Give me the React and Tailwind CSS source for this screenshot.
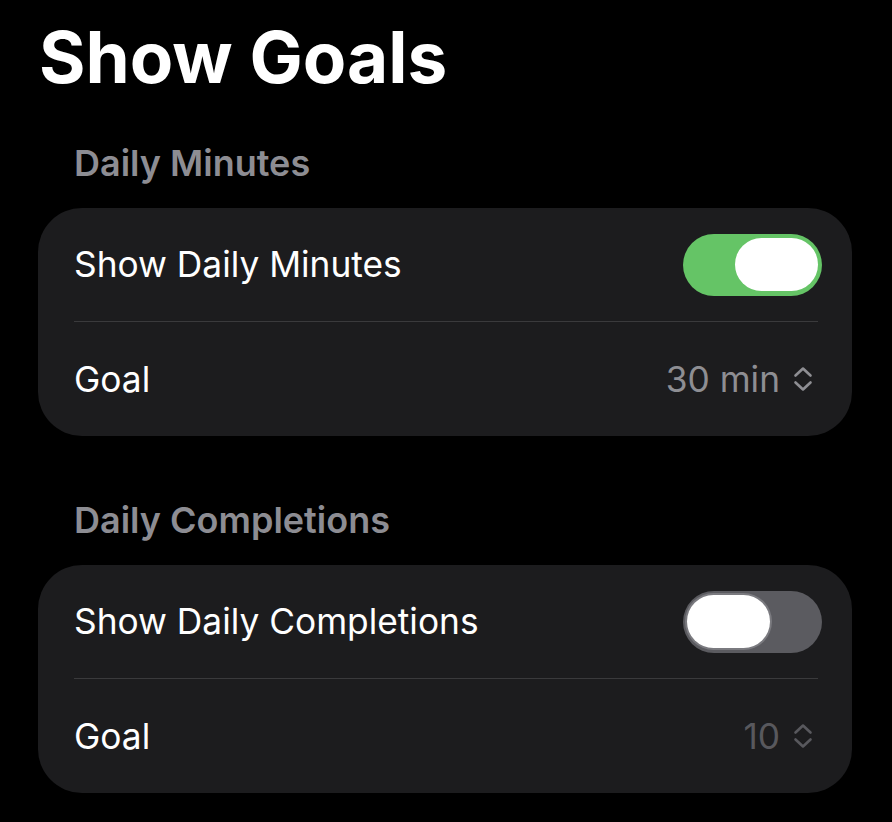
import React, { useState } from "react";

const font = { fontFamily: "Inter, 'Noto Sans', sans-serif" };

const Stepper = ({ dim }) => (
  <svg width="22" height="28" viewBox="0 0 22 28" fill="none" className={dim ? "text-[#58585d]" : "text-[#8e8e93]"}>
    <path d="M3.5 10.5 L11 3.5 L18.5 10.5" stroke="currentColor" strokeWidth="2.6" strokeLinecap="round" strokeLinejoin="round" />
    <path d="M3.5 17.5 L11 24.5 L18.5 17.5" stroke="currentColor" strokeWidth="2.6" strokeLinecap="round" strokeLinejoin="round" />
  </svg>
);

const Toggle = ({ on, onChange }) => (
  <button
    onClick={onChange}
    className={`flex h-[62px] w-[139px] items-center rounded-full px-[4px] ${on ? "justify-end bg-[#65c466]" : "justify-start bg-[#5b5b60]"}`}
  >
    <span className={`block h-[53px] w-[83px] rounded-full bg-white ${on ? "" : "ring-2 ring-[#7a7a7f]"}`} />
  </button>
);

const Section = ({ title, label, on, setOn, value, dim, first }) => (
  <div>
    <div className={`px-[36px] text-[36px] leading-[36px] font-semibold text-[#8d8d93] ${first ? "mt-[52px]" : "mt-[66px]"}`}>
      {title}
    </div>
    <div className="mt-[27px] rounded-[44px] bg-[#1c1c1e] pl-[36px] pr-[30px]">
      <div className="flex h-[113px] items-center justify-between">
        <span className="text-[35.3px] leading-[35px] text-white">{label}</span>
        <Toggle on={on} onChange={setOn} />
      </div>
      <div className="mr-[4px] h-px bg-[#3a3a3c]" />
      <div className="flex h-[114px] items-center justify-between pr-[8px]">
        <span className="text-[35.3px] leading-[35px] text-white">Goal</span>
        <div className="flex items-center gap-[12px]">
          <span className={`text-[35.3px] leading-[35px] ${dim ? "text-[#58585d]" : "text-[#8e8e93]"}`}>{value}</span>
          <Stepper dim={dim} />
        </div>
      </div>
    </div>
  </div>
);

export default function App() {
  const [minutes, setMinutes] = useState(true);
  const [completions, setCompletions] = useState(false);

  return (
    <div className="min-h-screen bg-black pl-[38px] pr-[40px] pt-[22px]" style={font}>
      <h1 className="pl-[1px] text-[71px] leading-[71px] font-bold text-white">Show Goals</h1>
      <Section
        first
        title="Daily Minutes"
        label="Show Daily Minutes"
        on={minutes}
        setOn={() => setMinutes(!minutes)}
        value="30 min"
        dim={!minutes}
      />
      <Section
        title="Daily Completions"
        label="Show Daily Completions"
        on={completions}
        setOn={() => setCompletions(!completions)}
        value="10"
        dim={!completions}
      />
    </div>
  );
}
